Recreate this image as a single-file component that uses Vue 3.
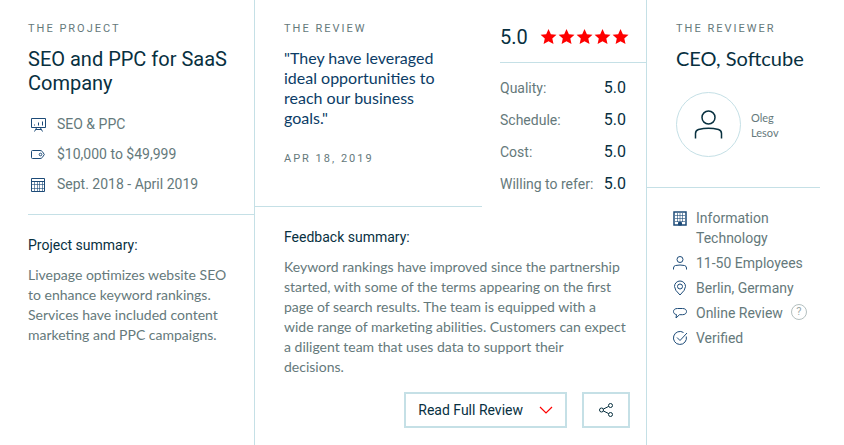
<script setup>
const ratings = [
  { label: 'Quality:', value: '5.0' },
  { label: 'Schedule:', value: '5.0' },
  { label: 'Cost:', value: '5.0' },
  { label: 'Willing to refer:', value: '5.0' },
]
</script>

<template>
  <article class="review">
    <section class="project">
      <header class="project-head">
        <h3 class="eyebrow">The Project</h3>
        <h2 class="title">SEO and PPC for SaaS Company</h2>
        <ul class="facts">
          <li>
            <svg class="icon" width="18" height="18" viewBox="0 0 18 18">
              <path d="M2.500 3.500h14v9h-14zM5.500 10.500v-1M9.500 10.500v-3M13.500 10.500v-4M7.500 13l-2 3.500M11.500 13l2 3.500M7 14.500h5" />
            </svg>
            <span>SEO &amp; PPC</span>
          </li>
          <li>
            <svg class="icon" width="18" height="18" viewBox="0 0 18 18">
              <path d="M2.500 6.500q0-1 1-1h7.500q1.500 0 2.300 1l2 3-2 3q-.8 1-2.300 1H3.500q-1 0-1-1z" />
              <circle cx="11.500" cy="9.500" r="1.300" />
            </svg>
            <span>$10,000 to $49,999</span>
          </li>
          <li>
            <svg class="icon" width="18" height="18" viewBox="0 0 18 18">
              <path d="M2.500 3.500h13v13h-13zM2.500 6.500h13" />
              <path class="mesh" d="M2.500 9.500h13M2.500 13.500h13M5.500 6.500v10M8.500 6.500v10M10.500 6.500v10M13.500 6.500v10" />
            </svg>
            <span>Sept. 2018 - April 2019</span>
          </li>
        </ul>
      </header>
      <div class="project-body">
        <h4 class="subhead">Project summary:</h4>
        <p class="copy">Livepage optimizes website SEO to enhance keyword rankings. Services have included content marketing and PPC campaigns.</p>
      </div>
    </section>

    <section class="feedback">
      <div class="feedback-top">
        <div class="quote">
          <h3 class="eyebrow">The Review</h3>
          <blockquote>"They have leveraged ideal opportunities to reach our business goals."</blockquote>
          <time class="eyebrow" datetime="2019-04-18">Apr 18, 2019</time>
        </div>
        <div class="scores">
          <div class="overall">
            <span>5.0</span>
            <div class="stars" role="img" aria-label="5 out of 5 stars">
              <svg v-for="n in 5" :key="n" width="18" height="18" viewBox="0 0 18 18">
                <path d="M8.500 1l2.400 5.200 5.600.5-4.200 3.800 1.200 5.500-5-2.800L3.600 16l1.200-5.500L.6 6.700l5.600-.5z" />
              </svg>
            </div>
          </div>
          <dl>
            <div v-for="r in ratings" :key="r.label">
              <dt>{{ r.label }}</dt>
              <dd>{{ r.value }}</dd>
            </div>
          </dl>
        </div>
      </div>
      <div class="feedback-body">
        <h4 class="subhead">Feedback summary:</h4>
        <p class="copy">Keyword rankings have improved since the partnership started, with some of the terms appearing on the first page of search results. The team is equipped with a wide range of marketing abilities. Customers can expect a diligent team that uses data to support their decisions.</p>
        <div class="actions">
          <button type="button" class="read">
            <span>Read Full Review</span>
            <svg width="14" height="8" viewBox="0 0 14 8"><path d="M1 1l6 6 6-6" /></svg>
          </button>
          <button type="button" class="share" aria-label="Share">
            <svg width="16" height="16" viewBox="0 0 16 16">
              <circle cx="3.500" cy="8" r="2" />
              <circle cx="12.500" cy="3.500" r="2" />
              <circle cx="12.500" cy="12.500" r="2" />
              <path d="M5.300 7.100l5.400-2.700M5.300 8.900l5.400 2.700" />
            </svg>
          </button>
        </div>
      </div>
    </section>

    <section class="reviewer">
      <header class="reviewer-head">
        <h3 class="eyebrow">The Reviewer</h3>
        <h2 class="title lato">CEO, Softcube</h2>
        <div class="person">
          <div class="avatar">
            <svg width="29" height="29" viewBox="0 0 29 29">
              <circle cx="14.500" cy="7.500" r="6.500" />
              <path d="M1.500 28.500v-5q0-3 3-4 5-1.300 10-1.300t10 1.300q3 1 3 4v5" />
            </svg>
          </div>
          <span class="name">Oleg Lesov</span>
        </div>
      </header>
      <ul class="details">
        <li>
          <svg class="icon" width="16" height="16" viewBox="0 0 16 16">
            <path class="wall" d="M2 2h12v13H2z" />
            <path class="mesh" d="M3 5.500h10M3 8.500h10M3 11.500h10M5.500 3v9M8 3v9M10.500 3v9" />
            <path class="door" d="M6.500 15v-2.500h3V15z" />
          </svg>
          <span>Information Technology</span>
        </li>
        <li>
          <svg class="icon" width="16" height="16" viewBox="0 0 16 16">
            <circle cx="8" cy="4.500" r="3" />
            <path d="M1.500 14.500v-1.500q0-2 2-2.500 4.500-1 9 0 2 .5 2 2.500v1.500" />
          </svg>
          <span>11-50 Employees</span>
        </li>
        <li>
          <svg class="icon" width="16" height="16" viewBox="0 0 16 16">
            <path d="M8 15Q2.500 10 2.500 6.500a5.500 5.500 0 0 1 11 0Q13.500 10 8 15z" />
            <circle cx="8" cy="6.500" r="2.500" />
          </svg>
          <span>Berlin, Germany</span>
        </li>
        <li>
          <svg class="icon" width="16" height="16" viewBox="0 0 16 16">
            <path d="M5.500 3.500h5c2.500 0 4 1.200 4 3s-1.500 3.200-4 3.200H7.500L4 13l.5-3.400c-2-.3-3-1.500-3-3.100 0-1.800 1.500-3 4-3z" />
          </svg>
          <span>Online Review</span>
          <button type="button" class="help" aria-label="About online reviews">?</button>
        </li>
        <li>
          <svg class="icon" width="16" height="16" viewBox="0 0 16 16">
            <path d="M11.500 2.500A6.500 6.500 0 1 0 14.300 6.500M5 7.500l3 3 7-7.500" />
          </svg>
          <span>Verified</span>
        </li>
      </ul>
    </section>
  </article>
</template>

<style>
body {
  margin: 0;
  background: #fff;
}
</style>

<style scoped>
.review {
  display: grid;
  grid-template-columns: 227fr 392fr 173fr;
  min-height: 100vh;
  padding: 0 24px 0 28px;
  box-sizing: border-box;
  font-family: Roboto, sans-serif;
  font-size: 14px;
  line-height: 20px;
  color: #65797b;
}
h2, h3, h4, p, ul, dl, dd, blockquote {
  margin: 0;
  padding: 0;
}
ul {
  list-style: none;
}
svg {
  display: block;
  flex: none;
  fill: none;
}
.eyebrow {
  display: block;
  font-size: 11px;
  font-weight: 400;
  line-height: 16px;
  letter-spacing: 2px;
  text-transform: uppercase;
}
.title {
  margin-top: 10px;
  font-size: 20px;
  font-weight: 400;
  line-height: 24px;
  color: #08303f;
}
.lato, .copy, blockquote, .name {
  font-family: Lato, sans-serif;
}
.lato {
  margin-top: 9px;
}
.subhead {
  font-size: 14px;
  font-weight: 400;
  color: #08303f;
}
.copy {
  margin-top: 10px;
}
.icon {
  stroke: #1d4b78;
  stroke-width: 1px;
}
.mesh {
  stroke-opacity: 0.6;
}
.project, .feedback {
  border-right: 1px solid #c5e0e6;
}
.project-head {
  padding: 21px 0 20px;
  border-bottom: 1px solid #c5e0e6;
}
.facts {
  display: grid;
  gap: 10px;
  margin-top: 19px;
}
.facts li {
  display: flex;
  align-items: center;
  gap: 10px;
  padding-left: 1px;
}
.project-body {
  padding: 20px 24px 0 0;
}
.feedback-top {
  display: grid;
  grid-template-columns: 227fr 146fr;
  align-items: start;
  column-gap: 18px;
}
.quote {
  padding: 21px 44px 39px 29px;
  border-bottom: 1px solid #c5e0e6;
}
blockquote {
  margin: 11px 0 23px;
  font-size: 16px;
  color: #0b3c66;
}
.overall {
  display: flex;
  align-items: flex-start;
  gap: 12px;
  padding: 27px 0 15px;
  border-bottom: 1px solid #c5e0e6;
  font-size: 20px;
  color: #08303f;
}
.stars {
  display: flex;
  padding-top: 1px;
}
.stars path {
  fill: #fe0000;
}
dl {
  display: grid;
  gap: 12px;
  padding: 15px 20px 0 0;
}
dl div {
  display: flex;
  justify-content: space-between;
  white-space: nowrap;
}
dd {
  font-size: 16px;
  color: #08303f;
}
.feedback-body {
  padding: 20px 16px 16px 29px;
}
.feedback-body .copy {
  padding-right: 4px;
}
.actions {
  display: flex;
  justify-content: flex-end;
  gap: 15px;
  margin-top: 15px;
}
button {
  font: inherit;
  color: inherit;
  cursor: pointer;
}
.read, .share {
  display: flex;
  align-items: center;
  justify-content: center;
  height: 36px;
  padding: 0 12px;
  border: 2px solid #c5e0e6;
  background: #fff;
  color: #08303f;
}
.read {
  gap: 16px;
}
.share {
  width: 48px;
}
.read svg {
  stroke: #fe0000;
  stroke-width: 1.2px;
}
.share svg {
  stroke: #08303f;
  stroke-width: 1px;
}
.reviewer-head {
  padding: 21px 0 30px 29px;
  border-bottom: 1px solid #c5e0e6;
}
.person {
  display: flex;
  align-items: center;
  gap: 10px;
  margin-top: 22px;
}
.avatar {
  display: grid;
  place-items: center;
  width: 63px;
  height: 63px;
  border: 1px solid #c5e0e6;
  border-radius: 50%;
}
.avatar svg {
  stroke: #08303f;
  stroke-width: 1.5px;
}
.name {
  width: min-content;
  font-size: 11px;
  line-height: 15px;
}
.details {
  display: grid;
  gap: 5px;
  padding: 20px 0 0 25px;
}
.details li {
  display: flex;
  gap: 8px;
}
.details .icon {
  margin-top: 2px;
}
.wall {
  stroke-width: 1.5px;
}
.door {
  fill: #1d4b78;
}
.help {
  width: 16px;
  height: 16px;
  margin-top: 1px;
  padding: 0;
  border: 1px solid #b4c0c0;
  border-radius: 50%;
  background: none;
  font-size: 11px;
  line-height: 14px;
  color: #9aa8a8;
}
</style>
